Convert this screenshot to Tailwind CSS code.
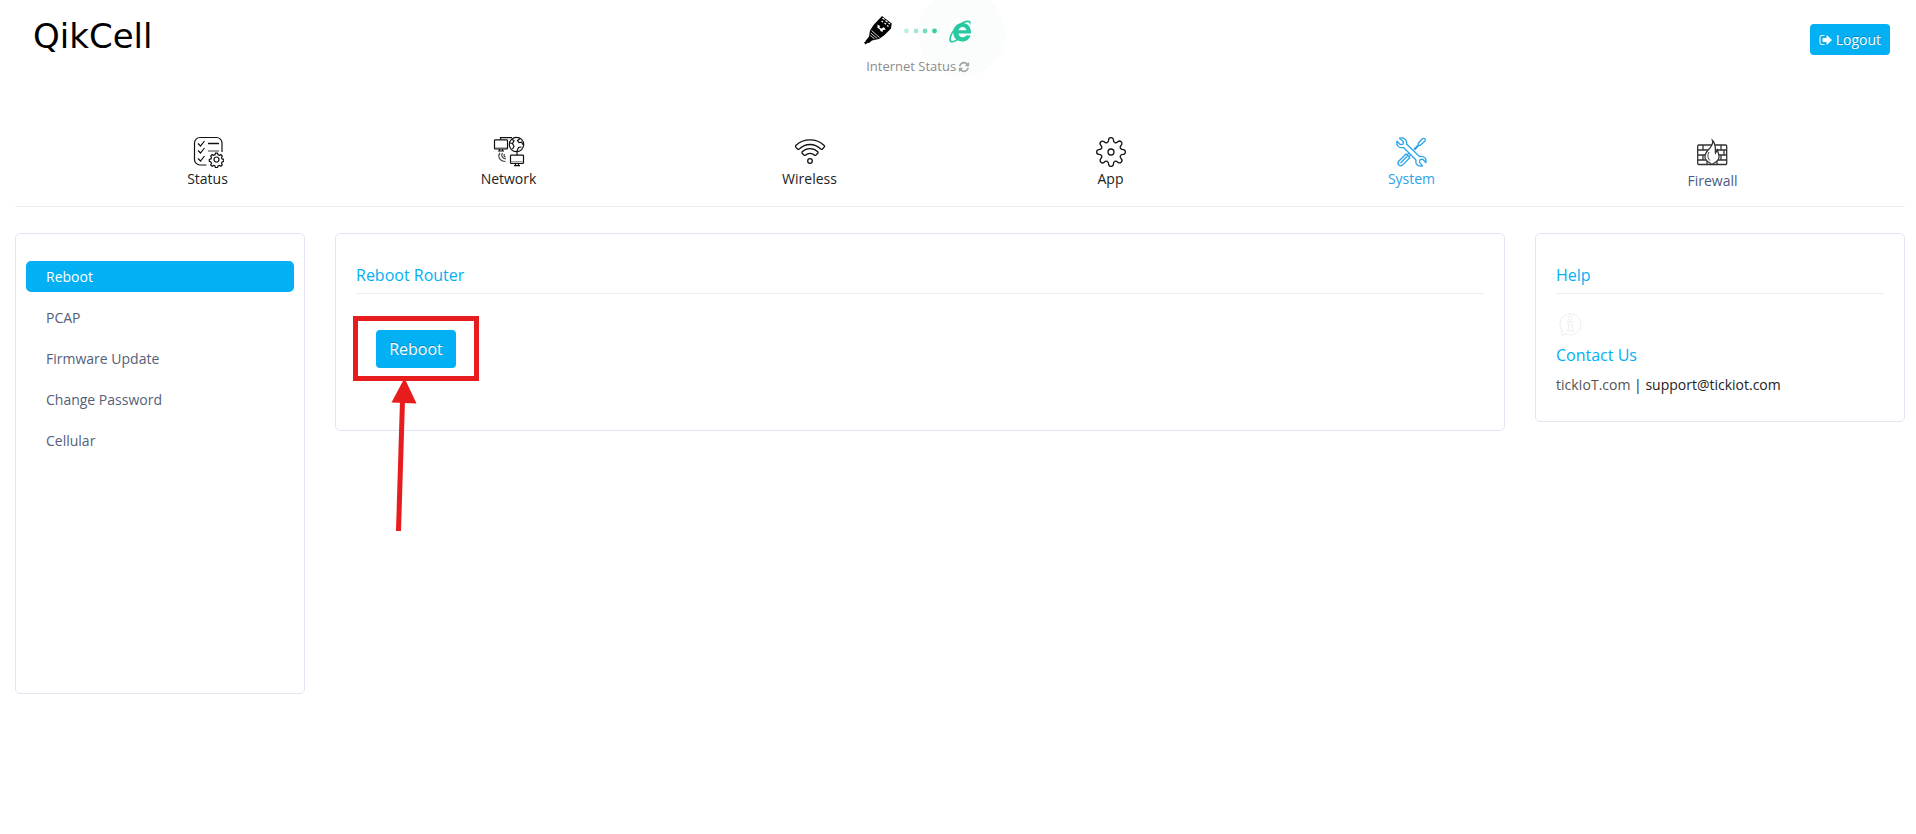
<!DOCTYPE html>
<html lang="en">
<head>
  <meta charset="UTF-8" />
  <title>QikCell - Reboot</title>
  <script src="https://cdn.jsdelivr.net/npm/@tailwindcss/browser@4"></script>
</head>
<body class="bg-white font-['Open_Sans',sans-serif] text-sm leading-[21px] text-[#222] min-h-screen">

  <!-- Header -->
  <header class="relative flex items-start h-[130px] overflow-hidden">
    <div class="w-[45%] pl-[33px]">
      <h1 class="font-['DejaVu_Sans',sans-serif] text-[34px] leading-[72px] text-black">QikCell</h1>
    </div>
    <div class="flex flex-col pt-3">
      <div class="flex items-center h-9">
        <!-- cable -->
        <svg class="w-8 h-8" viewBox="0 0 32 32">
          <path d="M20 2 29.700 9.500 29 14.500 22 21.500 17 25 10 26.500 7 29 4.500 28.500 3.500 27 7 22.500 8 16.500 11.500 11z" fill="#000" />
          <path d="M2 28.500 5 26.500 6 28.500 3.500 30.500z" fill="#000" />
          <path d="M20.500 4l2 1.500M23.500 6.500l2 1.500M26.500 9l1.500 1M19.500 7l1.500 1M22.500 9l1.500 1.200M25 11.500l1.500 1" stroke="#fff" stroke-width="1.200" />
          <path d="M15.500 10.500l2.500 1.500-.5 2 2.500.5 1.500-1.500 2.500 2.500-3 .5-.5 2-2-1-1-2-2-1z" fill="#fff" />
          <path d="M9.500 16.500l8 7M8.800 19l6.500 5.500M8.500 21.500l4 3.500" stroke="#fff" stroke-width=".8" />
        </svg>
        <!-- link dots -->
        <svg class="w-9 h-2 ml-2" viewBox="0 0 36 8">
          <circle cx="4.500" cy="5" r="2.400" fill="#bdeee1" />
          <circle cx="14" cy="5" r="2.400" fill="#a3e7d5" />
          <circle cx="23" cy="5" r="2.400" fill="#74dcc1" />
          <circle cx="32.500" cy="5" r="2.400" fill="#3acda6" />
        </svg>
        <!-- globe side -->
        <div class="relative ml-2 w-7 h-6">
          <div class="absolute -z-10 -left-[28px] -top-[28px] w-[87px] h-[87px] rounded-full bg-[#fafdfc]"></div>
          <svg class="w-7 h-7" viewBox="0 0 28 28">
            <circle cx="15" cy="12" r="12" fill="#fff" />
            <path d="M25 15.500H12.500c.200 2.400 1.800 3.700 4 3.700 1.700 0 2.800-.600 3.600-1.800h4.500c-1.300 3.900-4.400 6-8.300 6-5.300 0-9-3.700-9-9 0-5.400 3.800-9.300 9-9.300 5.500 0 9 3.900 8.700 10.400zM12.600 12.300h7.800c-.200-2.100-1.600-3.400-3.800-3.400-2.200 0-3.600 1.300-4 3.400z" fill="#27c9a0" fill-rule="evenodd" />
            <path d="M16 4.200C20 2 24 1.800 24.600 4c.3 1-.1 2.300-.8 3.800.4-2.500-.3-3.600-2-3.600-1.500 0-3.600.7-5.800 2C10 9.500 6 15.500 5 20c-.5 2.700.8 3.600 3.800 2.300l2.200-1.200 1.200 1C8.500 24.600 4.500 25.500 3.500 23 2 18.500 7.500 9 16 4.200z" fill="#27c9a0" />
          </svg>
        </div>
      </div>
      <p class="flex items-center gap-[2px] mt-2 pl-1 text-[13px] text-[#8c8c8c]">Internet Status
        <svg class="w-3 h-3" viewBox="0 0 1792 1792" fill="#a3a3a3"><path d="M1639 1056q0 5-1 7-64 268-268 434.500t-478 166.500q-146 0-282.500-55t-243.500-157l-129 129q-19 19-45 19t-45-19-19-45v-448q0-26 19-45t45-19h448q26 0 45 19t19 45-19 45l-137 137q71 66 161 102t187 36q134 0 250-65t186-179q11-17 53-117 8-23 30-23h192q13 0 22.500 9.500t9.500 22.500zm25-800v448q0 26-19 45t-45 19h-448q-26 0-45-19t-19-45 19-45l138-138q-148-137-349-137-134 0-250 65t-186 179q-11 17-53 117-8 23-30 23h-199q-13 0-22.500-9.500t-9.500-22.500v-7q65-268 270-434.500t480-166.500q146 0 284 55.500t245 156.500l130-129q19-19 45-19t45 19 19 45z" /></svg>
      </p>
    </div>
    <button class="flex items-center gap-[3px] ml-auto mt-6 mr-[26px] h-[31px] px-[9px] rounded bg-[#02b0f3] text-white [text-shadow:0_-1px_0_rgba(0,0,0,0.25)]">
      <svg class="w-[14px] h-[14px]" viewBox="0 0 1664 1792" fill="#fff"><path d="M640 1440q0 4 1 20t.5 26.500-3 23.500-10 19.500-20.500 6.500h-320q-119 0-203.500-84.500t-84.500-203.500v-704q0-119 84.500-203.500t203.500-84.500h320q13 0 22.500 9.500t9.500 22.500q0 4 1 20t.5 26.500-3 23.500-10 19.500-20.500 6.500h-320q-66 0-113 47t-47 113v704q0 66 47 113t113 47h312l11.500 1 11.500 3 8 5.500 7 9 2 13.500zm928-544q0 26-19 45l-544 544q-19 19-45 19t-45-19-19-45v-288h-448q-26 0-45-19t-19-45v-384q0-26 19-45t45-19h448v-288q0-26 19-45t45-19 45 19l544 544q19 19 19 45z" /></svg>
      Logout
    </button>
  </header>

  <!-- Top menu -->
  <nav class="mx-[15px] mr-[11px] px-[42px] pt-[6px] pb-[15px] border-b border-[#eee] grid grid-cols-6 text-center text-[#222]">
    <a href="#" class="flex flex-col items-center">
      <svg class="w-8 h-8" viewBox="-2 -1 32 32" fill="none" stroke="#111" stroke-width="1.200">
        <path d="M12.500 28H6a5.500 5.500 0 0 1-5.500-5.500V6A5.500 5.500 0 0 1 6 .5h16.500A5.500 5.500 0 0 1 28 6v9" />
        <path d="M4 6.500l2.500 2.500 4-5M4 13.500l2.500 2.500 4-5M4 21.500l2.500 2.500 4-5" />
        <path d="M14 6.500H25" stroke-width="1.500" />
        <path d="M14 14H25" stroke="#888" stroke-width="1.600" />
        <g transform="translate(22.500 22.500)">
          <path d="M-1-6.300h2l.5 1.600 1.400.6 1.500-.8 1.400 1.400-.8 1.500.6 1.400 1.600.5v2l-1.600.5-.6 1.400.8 1.500-1.400 1.400-1.500-.8-1.400.6-.5 1.600h-2l-.5-1.600-1.400-.6-1.500.8-1.400-1.400.8-1.500-.6-1.400-1.600-.5v-2l1.600-.5.6-1.400-.8-1.500 1.400-1.400 1.500.8 1.400-.6z" />
          <circle r="2.500" />
        </g>
      </svg>
      Status
    </a>
    <a href="#" class="flex flex-col items-center">
      <svg class="w-8 h-8" viewBox="0 -1 32 32" fill="none" stroke="#111" stroke-width="1.200">
        <path d="M7.500 2.500V.6H19" />
        <path d="M1.500 10.300h13v1.600h-13z" fill="#999" stroke="none" />
        <rect x="1.500" y="2.800" width="13" height="9.200" rx=".8" />
        <path d="M6.500 12v2M9.500 12v2M5 14h6" />
        <circle cx="23.500" cy="7.500" r="7.200" />
        <path d="M19 2.500l2 1-1.500 3 1.500 3-1.500 2.500M27 1.500l-2.500 2.200 1.500 2 2.500-.5 1.500 2.500M24 14l1.500-3.500 3-.5M17 6l2.500.5" />
        <path d="M24 14.700V18" />
        <rect x="17.500" y="18.200" width="13" height="8.300" rx=".8" />
        <path d="M18 24.800h12" stroke="#888" />
        <path d="M22.500 26.500v2M25.500 26.500v2M21 28.700h6" />
        <path d="M7 16c-2.500 3-1 8 5.500 8.500M9.500 16c-1.800 2.500-.5 5.500 3.500 6M11.500 17c-1 1.500-.3 2.700 1 3" stroke="#444" />
      </svg>
      Network
    </a>
    <a href="#" class="flex flex-col items-center">
      <svg class="w-8 h-8" viewBox="-1 -1 32 32" fill="none" stroke="#111" stroke-width="1.300" stroke-linejoin="round">
        <path d="M.8 8.500C8.500 1 21.500 1 29.200 8.500q.8.800 0 1.600L27.500 12q-.8.700-1.700 0C19.500 6 10.500 6 4.200 12q-.9.700-1.700 0L.8 10.100q-.8-.8 0-1.600z" />
        <path d="M7.200 14.700C11.500 10.500 18.500 10.500 22.800 14.700q.7.700 0 1.500L21 18q-.8.700-1.700 0C17 15.700 13 15.700 10.700 18q-.9.700-1.700 0l-1.800-1.800q-.7-.8 0-1.500z" />
        <circle cx="15" cy="24" r="2.300" />
      </svg>
      Wireless
    </a>
    <a href="#" class="flex flex-col items-center">
      <svg class="w-8 h-8" viewBox="-16 -16 32 32" fill="none" stroke="#111" stroke-width="1.300">
        <defs>
          <path id="tooth" d="M-3.900-9.300C-2.600-9.800-2.400-10.500-2.400-12A2.400 2.400 0 0 1 2.400-12C2.400-10.500 2.600-9.800 3.900-9.300" />
        </defs>
        <use href="#tooth" />
        <use href="#tooth" transform="rotate(45)" />
        <use href="#tooth" transform="rotate(90)" />
        <use href="#tooth" transform="rotate(135)" />
        <use href="#tooth" transform="rotate(180)" />
        <use href="#tooth" transform="rotate(225)" />
        <use href="#tooth" transform="rotate(270)" />
        <use href="#tooth" transform="rotate(315)" />
        <circle r="3" />
      </svg>
      App
    </a>
    <a href="#" class="flex flex-col items-center text-[#2aa3e8]">
      <svg class="w-8 h-8" viewBox="0 -1 32 32" fill="none" stroke="#2aa3e8" stroke-width="1.300" stroke-linejoin="round">
        <!-- screwdriver -->
        <path d="M18.500 13l4-4.300-.2-2.400 4-4.500q1.500-1 2.500 0t0 2.500l-4.500 4-2.400-.2-4 4.200M14.500 14.500l-3 3M16.200 16l-3 3M10 17l3.800 3.800-7.300 7.300q-2 1.500-3.700-.1t-.1-3.700zM4.500 26l6.500-6.500" />
        <!-- wrench -->
        <path d="M3.500 1.200l4 3.500-.5 2.500-2.500.5L1 4.300C0 8.500 3 11.500 7.500 10.500l12.500 12.500C19 27.500 22.500 30 26.500 28.800l-3-3.500.5-2.600 2.600-.5 3.200 3.300C31 21.500 28 18.500 23.500 19.500L10.500 7C11.500 3 8 0 3.500 1.200z" fill="#fff" />
      </svg>
      System
    </a>
    <a href="#" class="flex flex-col items-center text-[#4a5a80]">
      <svg class="w-8 h-[34px]" viewBox="1 -4 32 34" fill="none" stroke="#333" stroke-width="1.300">
        <rect x="1.700" y="5" width="29" height="19.500" rx="1" />
        <path d="M2 10h29M2 15h29M2 20h29M7 5v5M25 5v5M28 10v5M7 15v5M25 15v5M11 20v4.500M21 20v4.500" />
        <path d="M16.500.5c1 3.500-1 5.500-3 8C10 12 8.500 14 9 17.500c.5 3.500 4.500 5 7 7 3-2 6.500-3.500 7-7 .3-3-1-4.500-1.500-7.500l-2 3c-.5-4 1-8.500-3-12.500z" fill="#fff" />
        <path d="M13 12c-2 3.500-1 6.500 1 8.500" stroke-width="1" />
      </svg>
      Firewall
    </a>
  </nav>

  <!-- Content -->
  <main class="mt-[26px] ml-[15px] mr-[11px] grid grid-cols-[29fr_117fr_37fr] gap-[30px] items-start">

    <aside class="border border-[#e3e6f1] rounded-[5px] px-[10px] pt-[27px] min-h-[461px]">
      <ul class="flex flex-col gap-[10px] text-[#54607a]">
        <li><a href="#" class="block rounded-[5px] px-5 py-[5px] bg-[#02b0f3] text-white">Reboot</a></li>
        <li><a href="#" class="block px-5 py-[5px]">PCAP</a></li>
        <li><a href="#" class="block px-5 py-[5px]">Firmware Update</a></li>
        <li><a href="#" class="block px-5 py-[5px]">Change Password</a></li>
        <li><a href="#" class="block px-5 py-[5px]">Cellular</a></li>
      </ul>
    </aside>

    <section class="border border-[#e3e6f1] rounded-[5px] px-5 pt-[29px] pb-[62px]">
      <h2 class="text-base text-[#02b0f3] pb-[6px] border-b border-[#eee]">Reboot Router</h2>
      <div class="relative w-fit mt-9 ml-5">
        <button class="block w-20 h-[38px] rounded bg-[#02b0f3] text-white text-base [text-shadow:0_-1px_0_rgba(0,0,0,0.25)]">Reboot</button>
        <!-- callout -->
        <svg class="absolute -left-[23px] -top-[14px] w-[126px] h-[216px] pointer-events-none" viewBox="0 0 126 216">
          <rect x="2.500" y="2.500" width="121" height="60" fill="none" stroke="#e71c1c" stroke-width="5" />
          <path d="M49.500 84 45.500 215" stroke="#e71c1c" stroke-width="5" />
          <path d="M51.500 62 38.500 86.500 63.500 87.500z" fill="#e71c1c" />
        </svg>
      </div>
    </section>

    <section class="border border-[#e3e6f1] rounded-[5px] px-5 pt-[29px] pb-[26px]">
      <h2 class="text-base text-[#02b0f3] pb-[6px] border-b border-[#eee]">Help</h2>
      <svg class="w-8 h-6 mt-[18px]" viewBox="0 0 32 24" fill="none" stroke="#eee" stroke-width="1">
        <path d="M6 18.500A10.500 10.500 0 1 1 10 21.800L6 23.500z" />
        <circle cx="14" cy="6" r="2" />
        <path d="M11.500 9.500H16v8h1.500v1.500h-6v-1.500h1.300v-6.500h-1.300z" />
      </svg>
      <h2 class="mt-[7px] text-base text-[#02b0f3]">Contact Us</h2>
      <p class="mt-[7px] text-[#222]"><a href="#" class="text-[#555]">tickIoT.com</a> | <a href="#">support@tickiot.com</a></p>
    </section>
  </main>

</body>
</html>
